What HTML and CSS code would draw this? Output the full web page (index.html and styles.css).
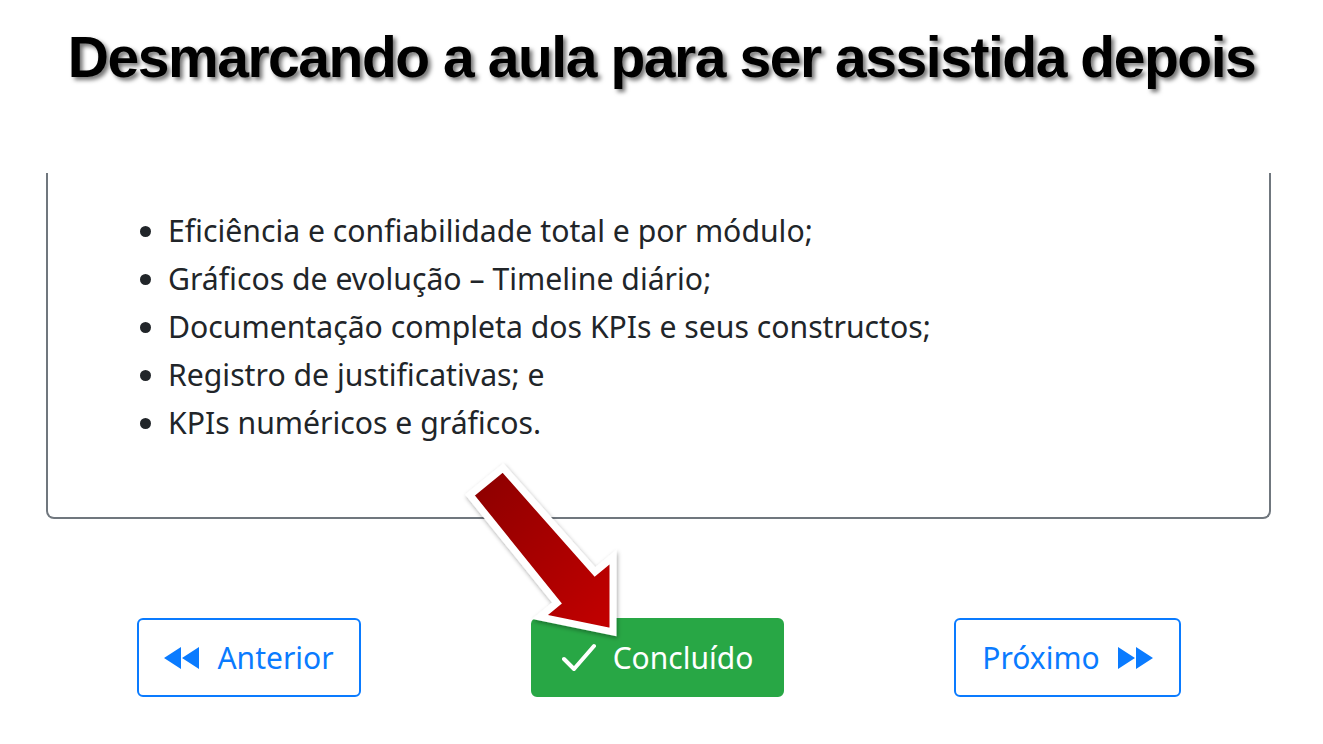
FILE: index.html
```html
<!DOCTYPE html>
<html lang="pt-BR">
<head>
<meta charset="utf-8">
<title>Desmarcando a aula</title>
<link rel="stylesheet" href="styles.css">
</head>
<body>
<div class="page">
  <header class="header">
    <h1 class="title">Desmarcando a aula para ser assistida depois</h1>
  </header>
  <section class="card">
    <ul class="topics">
      <li>Eficiência e confiabilidade total e por módulo;</li>
      <li>Gráficos de evolução – Timeline diário;</li>
      <li>Documentação completa dos KPIs e seus constructos;</li>
      <li>Registro de justificativas; e</li>
      <li>KPIs numéricos e gráficos.</li>
    </ul>
  </section>
  <nav class="nav">
    <button class="btn btn-outline">
      <svg class="ico" viewBox="0 0 36 22" width="36" height="22"><path d="M0 11 L17 0 L17 22 Z M18 11 L35 0 L35 22 Z" fill="#0a7bff"/></svg>
      <span>Anterior</span>
    </button>
    <button class="btn btn-success">
      <svg class="ico check" viewBox="0 0 34 30" width="34" height="30"><path d="M2 16 L12 26 L32 3" fill="none" stroke="#fff" stroke-width="4" stroke-linecap="round" stroke-linejoin="round"/></svg>
      <span>Concluído</span>
    </button>
    <button class="btn btn-outline btn-next">
      <span>Próximo</span>
      <svg class="ico" viewBox="0 0 36 22" width="36" height="22"><path d="M1 0 L18 11 L1 22 Z M19 0 L36 11 L19 22 Z" fill="#0a7bff"/></svg>
    </button>
  </nav>
  <svg class="arrow" viewBox="455 455 175 195" width="175" height="195">
    <defs>
      <linearGradient id="ag" x1="0" y1="0" x2="1" y2="1">
        <stop offset="0" stop-color="#8a0000"/>
        <stop offset="1" stop-color="#c40000"/>
      </linearGradient>
      <filter id="sh" x="-20%" y="-20%" width="140%" height="140%">
        <feDropShadow dx="1" dy="2" stdDeviation="2" flood-color="#000" flood-opacity="0.35"/>
      </filter>
    </defs>
    <polygon points="503,468 595,572 613,557 613,632 540,617 557,603 470,495" fill="url(#ag)" stroke="#fff" stroke-width="7" stroke-linejoin="miter" filter="url(#sh)"/>
  </svg>
</div>
</body>
</html>
```
FILE: styles.css
```css
html, body {
  margin: 0;
  padding: 0;
  background: #fff;
}
.page {
  position: relative;
  width: 1323px;
  height: 744px;
  overflow: hidden;
}
.header {
  padding-top: 24px;
  height: 149px;
  box-sizing: content-box;
}
.title {
  margin: 0;
  text-align: center;
  font-family: "Liberation Sans", Arial, sans-serif;
  font-weight: bold;
  font-size: 57px;
  letter-spacing: -1.45px;
  line-height: 66px;
  color: #000;
  text-shadow: 3px 3px 4px rgba(0, 0, 0, 0.55);
}
.card {
  margin: 0 52px 0 46px;
  border: 2px solid #70777e;
  border-top: none;
  border-radius: 0 0 8px 8px;
  padding: 34px 0 70px 0;
}
.topics {
  margin: 0;
  padding-left: 120px;
  font-family: "Noto Sans", "Open Sans", sans-serif;
  font-size: 30.2px;
  line-height: 48px;
  color: #212529;
}
.nav {
  display: flex;
  justify-content: center;
  gap: 170px;
  margin-top: 99px;
  padding-right: 5px;
}
.btn {
  display: flex;
  align-items: center;
  justify-content: center;
  gap: 17px;
  height: 79px;
  box-sizing: border-box;
  border-radius: 6px;
  font-family: "Noto Sans", "Open Sans", sans-serif;
  font-size: 30px;
  cursor: pointer;
}
.btn-outline {
  background: #fff;
  border: 2px solid #0a7bff;
  color: #0a7bff;
  width: 224px;
}
.btn-next {
  width: 227px;
}
.btn-success {
  background: #28a745;
  border: 2px solid #28a745;
  color: #fff;
  width: 253px;
}
.ico {
  display: block;
  flex: none;
}
.arrow {
  position: absolute;
  left: 455px;
  top: 455px;
  overflow: visible;
  pointer-events: none;
}
```
